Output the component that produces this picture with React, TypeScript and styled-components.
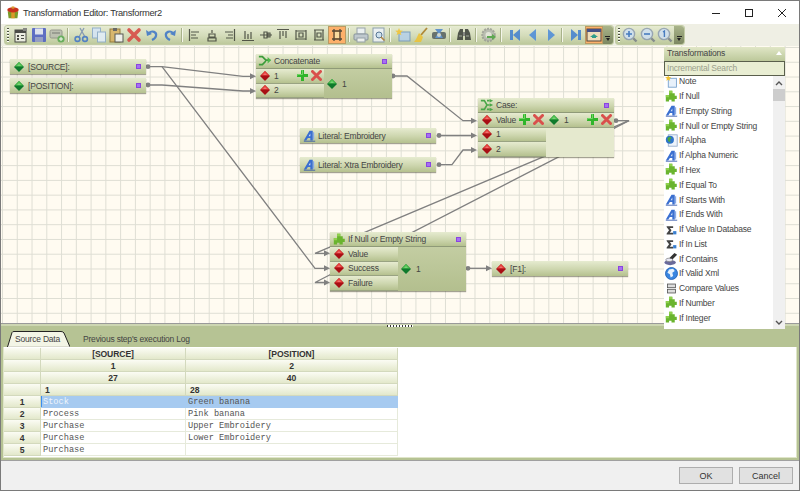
import React from "react";
import styled, { createGlobalStyle } from "styled-components";

const GlobalStyle = createGlobalStyle`
  html, body { margin: 0; padding: 0; background: #f0f0f0; }
  body { font-family: "Liberation Sans", Arial, sans-serif; font-size: 8.5px; letter-spacing: -0.2px; color: #444; }
`;

/* ---------- icons ---------- */

const Svg = styled.svg`
  display: block;
  flex: none;
`;

const Ico = ({ s = 16, children }: { s?: number; children: React.ReactNode }) => (
  <Svg width={s} height={s} viewBox="0 0 16 16">
    {children}
  </Svg>
);

const Diamond = ({ light, dark }: { light: string; dark: string }) => (
  <Svg width={10} height={10} viewBox="0 0 10 10">
    <polygon points="5,0 10,5 5,10 0,5" fill={dark} />
    <polygon points="5,0 9,4.6 1,4.6" fill={light} />
    <polygon points="5,2 7,4 3,4" fill="#fff" opacity="0.25" />
  </Svg>
);
const GreenPort = () => <Diamond light="#4dc24d" dark="#0f7a2c" />;
const RedPort = () => <Diamond light="#e8403c" dark="#a80f14" />;

const PlusIcon = () => (
  <Svg width={11} height={11} viewBox="0 0 11 11">
    <path d="M4 0h3v4h4v3H7v4H4V7H0V4h4z" fill="#2fb52a" />
    <path d="M4.5 .5h1v4h-5v1" fill="none" stroke="#8fe27e" strokeWidth="0.7" />
  </Svg>
);
const CrossIcon = () => (
  <Svg width={11} height={11} viewBox="0 0 11 11">
    <path d="M1.5 1.5l8 8M9.5 1.5l-8 8" stroke="#d9504c" strokeWidth="3" strokeLinecap="round" />
  </Svg>
);

const Puzzle = () => (
  <Ico s={13}>
    <path d="M5 1h4v3h3v3h2.5v4H12v3H8v-2H5v2H1V6h4z" fill="#6ab42e" />
    <path d="M5 1h4v3H5zM1 6h4v3H1z" fill="#8fd04c" />
  </Ico>
);
const LiteralIcon = () => (
  <Ico s={13}>
    <path d="M1 14L8 2h4v12h-3v-3H6l-2 3z" fill="#3a6fd0" />
    <path d="M7 9l2-3.5V9z" fill="#dfe9fb" />
    <path d="M1 15h14" stroke="#2a4fa8" />
    <path d="M13 4v9" stroke="#88aae8" strokeWidth="1.5" />
  </Ico>
);
const NoteIcon = () => (
  <Ico s={13}>
    <rect x="4" y="4" width="10" height="11" fill="#e8f1fb" stroke="#6d9ac8" />
    <path d="M4 0l1 2.6 2.8.2-2.2 1.7.8 2.7L4 5.7 1.6 7.2l.8-2.7L.2 2.8 3 2.6z" fill="#f2c230" />
  </Ico>
);
const GlobeDoc = () => (
  <Ico s={13}>
    <rect x="4" y="1" width="11" height="14" fill="#eef3fa" stroke="#8fa8c8" />
    <circle cx="6" cy="7" r="5" fill="#2f74c8" />
    <path d="M3 5l3-2 2 2-2 2 1 3-3-1z" fill="#4ca83c" />
  </Ico>
);
const DbIcon = () => (
  <Ico s={13}>
    <path d="M2 4h8v2H6l2 3-2 3h4v2H2v-1l3-4-3-4z" fill="#444" />
    <rect x="10" y="10" width="4" height="4" fill="#3a7fd0" />
  </Ico>
);
const BrushIcon = () => (
  <Ico s={14}>
    <ellipse cx="7" cy="12" rx="6.5" ry="3" fill="#6a6a9a" />
    <path d="M12 1l3 2-6 6-3-2z" fill="#333" />
    <ellipse cx="6" cy="9" rx="4" ry="2" fill="#e8e8f4" stroke="#555" strokeWidth="0.6" />
  </Ico>
);
const GlobeIcon = () => (
  <Ico s={13}>
    <circle cx="8" cy="8" r="7.4" fill="#3a86e0" stroke="#1e5cb0" />
    <path d="M5 3l5-1 2 3-3 2 1 4-3 2-1-4-3-2z" fill="#e8f2fc" />
  </Ico>
);
const CompareIcon = () => (
  <Ico s={13}>
    <rect x="3" y="2.5" width="10" height="4.5" fill="#ddd" stroke="#555" />
    <rect x="3" y="9" width="10" height="4.5" fill="#ddd" stroke="#555" />
  </Ico>
);
const ConcatIcon = () => (
  <Ico s={14}>
    <path d="M1 3h4l4 4h5M1 12h4l4-4" fill="none" stroke="#3c9c3a" strokeWidth="2" />
    <path d="M11 3.5l4 3.7-4 3.7z" fill="#4fb84a" />
  </Ico>
);
const CaseIcon = () => (
  <Ico s={14}>
    <path d="M1 3h4l3 5-3 5H1M8 3h3M8 13h3M8 8h3" fill="none" stroke="#4aa648" strokeWidth="1.8" />
    <path d="M11 1l4 2-4 2zM11 6l4 2-4 2zM11 11l4 2-4 2z" fill="#4aa648" />
  </Ico>
);

/* toolbar glyphs */
const PropsIcon = () => (
  <Ico>
    <rect x="2" y="3" width="11" height="12" fill="#f0f0e8" stroke="#333" />
    <rect x="2" y="3" width="11" height="3" fill="#333" />
    <path d="M4 8h2v2H4zM4 11h2v2H4zM8 8h3v1H8zM8 11h3v1H8z" fill="#333" />
    <rect x="10" y="1" width="4" height="3" fill="#777" />
  </Ico>
);
const SaveIcon = () => (
  <Ico>
    <rect x="1" y="1" width="14" height="14" rx="1" fill="#4a5cc4" />
    <rect x="4" y="1.5" width="8" height="6" fill="#dfe4f6" />
    <rect x="4" y="10" width="8" height="5" fill="#8c96c8" />
  </Ico>
);
const AddIcon = () => (
  <Ico>
    <rect x="1" y="3" width="12" height="8" rx="1.5" fill="#b9bdb0" stroke="#8a8c84" />
    <rect x="3" y="5" width="8" height="2" fill="#8f928a" />
    <circle cx="12" cy="12" r="3.6" fill="#58a850" />
    <path d="M12 10v4M10 12h4" stroke="#fff" />
  </Ico>
);
const CutIcon = () => (
  <Ico>
    <path d="M11 1L6 10M7 1l5 9" stroke="#7a8fb0" strokeWidth="1.3" />
    <circle cx="4.5" cy="12" r="2.4" fill="none" stroke="#3f74c8" strokeWidth="1.6" />
    <circle cx="12" cy="12" r="2.4" fill="none" stroke="#3f74c8" strokeWidth="1.6" />
  </Ico>
);
const CopyIcon = () => (
  <Ico>
    <rect x="1.5" y="1" width="8" height="10" fill="#d5e5f7" stroke="#88a8cc" />
    <rect x="6.5" y="5" width="8" height="10" fill="#e3effb" stroke="#88a8cc" />
  </Ico>
);
const PasteIcon = () => (
  <Ico>
    <rect x="2" y="2" width="10" height="13" fill="#d8b060" stroke="#8a6a28" />
    <rect x="5" y="1" width="4" height="3" fill="#555" />
    <rect x="7" y="7" width="8" height="8" fill="#f4f4f4" stroke="#444" />
  </Ico>
);
const DeleteIcon = () => (
  <Ico>
    <path d="M3 3l10 10M13 3L3 13" stroke="#d8433f" strokeWidth="3.6" strokeLinecap="round" />
  </Ico>
);
const UndoIcon = () => (
  <Ico>
    <path d="M5 6c3-3 8-1 7 3-.4 2-2 3-4 4" fill="none" stroke="#3a74c8" strokeWidth="2.2" />
    <path d="M2 3l1 6 5-2z" fill="#3a74c8" />
  </Ico>
);
const RedoIcon = () => (
  <Ico>
    <path d="M11 6C8 3 3 5 4 9c.4 2 2 3 4 4" fill="none" stroke="#3a74c8" strokeWidth="2.2" />
    <path d="M14 3l-1 6-5-2z" fill="#3a74c8" />
  </Ico>
);
const Bars = ({ d }: { d: string }) => (
  <Ico>
    <path d={d} fill="none" stroke="#3d4036" strokeWidth="1.2" />
  </Ico>
);
const alignPaths = [
  "M3.5 2v12M5 5h8M5 8h5M5 11h7",
  "M8 3v3M5 7h6v3H5zM4 11h8v3H4z",
  "M12.5 2v12M3 5h8M6 8h5M4 11h7",
  "M2 13.5h12M5 12V4M8 12V7M11 12V5",
  "M2 8h12M6 5h3v6H6zM10 6h2v4h-2z",
  "M2 2.5h12M5 4v8M8 4v5M11 4v7",
  "M3 3v10M13 3v10M3 4h10M3 12h10M6 6h4v4H6z",
  "M3 3h10M3 13h10M4 3v10M12 3v10M6 6h4v4H6z",
];
const SizeActive = () => (
  <Ico>
    <path d="M3 4h10M3 12h10M5 2v12M11 2v12" stroke="#33362c" strokeWidth="1.3" />
    <rect x="6" y="5" width="4" height="6" fill="#f7e3a8" />
  </Ico>
);
const PrintIcon = () => (
  <Ico>
    <rect x="4" y="1" width="8" height="6" fill="#eef3f8" stroke="#8c98a8" />
    <rect x="1" y="7" width="14" height="6" rx="1" fill="#bcc6d2" stroke="#7a8696" />
    <rect x="4" y="11" width="8" height="4" fill="#f4f6f8" stroke="#8c98a8" />
  </Ico>
);
const PreviewIcon = () => (
  <Ico>
    <rect x="2" y="1" width="11" height="14" fill="#eef3f8" stroke="#7f93aa" />
    <circle cx="8" cy="8" r="3" fill="#cfe4f8" stroke="#42648c" />
    <path d="M10 10l3.5 3.5" stroke="#b07830" strokeWidth="1.6" />
  </Ico>
);
const NewNoteIcon = () => (
  <Ico>
    <rect x="4" y="5" width="11" height="9" fill="#b5d0ea" stroke="#6d94bc" />
    <path d="M4 1l1 2.6 2.8.2-2.2 1.7.8 2.7L4 6.7 1.6 8.2l.8-2.7L.2 3.8 3 3.6z" fill="#f2c230" />
  </Ico>
);
const BroomIcon = () => (
  <Ico>
    <path d="M14 1L8 8" stroke="#a87a20" strokeWidth="1.8" />
    <path d="M6 6l4 4-2 5H1c2-2 3-5 5-9z" fill="#eec232" />
  </Ico>
);
const LinkIcon = () => (
  <Ico>
    <rect x="1" y="5" width="14" height="7" rx="2" fill="#55605f" />
    <path d="M4 2h8l-3 4 3 5H4l3-5z" fill="#4d86cc" />
    <circle cx="8" cy="8" r="2" fill="#cfd6d0" />
  </Ico>
);
const BinocularsIcon = () => (
  <Ico>
    <path d="M2 6l2-4h3v11H1zM14 6l-2-4H9v11h6z" fill="#3a3e38" />
    <rect x="7" y="5" width="2" height="4" fill="#777" />
    <path d="M3 9h3M10 9h3" stroke="#9aa094" />
  </Ico>
);
const GearIcon = () => (
  <Ico>
    <circle cx="7.5" cy="8" r="6.2" fill="#b4b8ae" stroke="#9a9d94" strokeDasharray="2 1" strokeWidth="2" />
    <circle cx="7.5" cy="8" r="3" fill="#e4e6dc" />
    <path d="M6 9h5V7l4 3-4 3v-2H6z" fill="#4aa040" />
  </Ico>
);
const FirstIcon = () => (
  <Ico>
    <rect x="3" y="3" width="3" height="10" fill="#3f7fd0" />
    <path d="M13 2v12L6 8z" fill="#3f7fd0" />
  </Ico>
);
const PrevIcon = () => (
  <Ico>
    <path d="M11 2v12L4 8z" fill="#4a8ada" />
  </Ico>
);
const NextIcon = () => (
  <Ico>
    <path d="M5 2v12l7-6z" fill="#4a8ada" />
  </Ico>
);
const LastIcon = () => (
  <Ico>
    <path d="M3 2v12l7-6z" fill="#3f7fd0" />
    <rect x="10" y="3" width="3" height="10" fill="#3f7fd0" />
  </Ico>
);
const PanelToggle = () => (
  <Ico>
    <rect x="1" y="2" width="14" height="12" fill="#efe4c8" stroke="#333" />
    <rect x="1" y="2" width="14" height="3" fill="#27408c" />
    <path d="M6 9h4v2H6z" fill="#0e9a90" />
    <path d="M4 10l4-3 4 3z" fill="#0e9a90" />
  </Ico>
);
const Lens = ({ mark }: { mark: React.ReactNode }) => (
  <Ico>
    <path d="M10 10l4.5 4.5" stroke="#7a8088" strokeWidth="2.4" />
    <circle cx="7" cy="7" r="5.6" fill="#cfe0f2" stroke="#8d9cb0" strokeWidth="1.4" />
    {mark}
  </Ico>
);
const ZoomInIcon = () => <Lens mark={<path d="M4 7h6M7 4v6" stroke="#2f6cc0" strokeWidth="1.6" />} />;
const ZoomOutIcon = () => <Lens mark={<path d="M4 7h6" stroke="#2f6cc0" strokeWidth="1.6" />} />;
const ZoomOneIcon = () => <Lens mark={<path d="M6 5l1.4-1v6" fill="none" stroke="#2f6cc0" strokeWidth="1.4" />} />;

const AppIcon = () => (
  <Ico s={14}>
    <path d="M2 6h12l-1 8H3z" fill="#7a9a28" />
    <path d="M6 6h4v8H6z" fill="#d89a28" />
    <ellipse cx="8" cy="4.5" rx="6.5" ry="3" fill="#c8301c" />
    <rect x="6.5" y="0.5" width="3" height="2.5" fill="#d8a030" />
  </Ico>
);

/* ---------- window chrome ---------- */

const Window = styled.div`
  box-sizing: border-box;
  width: 800px;
  height: 491px;
  border: 1px solid #7a7a7a;
  display: flex;
  flex-direction: column;
  overflow: hidden;
  background: #f0f0f0;
`;

const TitleBar = styled.div`
  height: 23px;
  flex: none;
  background: #fff;
  display: flex;
  align-items: center;
  padding-left: 5px;
`;

const Title = styled.span`
  margin-left: 3px;
  font-size: 9.3px;
  letter-spacing: -0.3px;
  color: #333;
`;

const WinControls = styled.div`
  margin-left: auto;
  display: flex;
  margin-right: 1px;
`;

const WinButton = styled.div`
  width: 33px;
  height: 23px;
  display: flex;
  align-items: center;
  justify-content: center;
`;

const ToolbarBand = styled.div`
  height: 22px;
  flex: none;
  background: #efefe4;
  display: flex;
  align-items: flex-start;
  padding: 1px 0 0 3px;
  gap: 1px;
  box-sizing: border-box;
`;

const Toolbar = styled.div`
  height: 20px;
  display: flex;
  align-items: center;
  box-sizing: border-box;
  border: 1px solid #c3cca6;
  border-radius: 3px;
  background: linear-gradient(#e6ebd2, #d3dbb9 55%, #bdc99c);
`;

const Grip = styled.div<{ $tight?: boolean }>`
  width: 6px;
  height: 14px;
  margin-right: ${(p) => (p.$tight ? "-1px" : "1px")};
  flex: none;
  background: repeating-linear-gradient(#4c5040 0 1px, #fff 1px 2px, transparent 2px 3px) 2px 0 / 2px 100% no-repeat;
`;

const ToolButton = styled.div<{ $active?: boolean }>`
  width: 17.9px;
  height: 18px;
  box-sizing: border-box;
  flex: none;
  display: flex;
  align-items: center;
  justify-content: center;
  ${(p) => p.$active && "background: #fdb06a; border: 1px solid #b99a64;"}
  svg {
    opacity: 0.85;
  }
`;

const ToolSep = styled.div<{ $extra?: number }>`
  width: 1px;
  height: 14px;
  flex: none;
  margin: 0 ${(p) => 2.5 + (p.$extra ?? 0)}px 0 2.5px;
  background: #f4f6ea;
  box-shadow: -1px 0 0 #a8b28a;
`;

const Overflow = styled.div`
  width: 10px;
  height: 100%;
  flex: none;
  background: linear-gradient(#a9b48a, #7d8862);
  border-radius: 0 3px 3px 0;
  display: flex;
  flex-direction: column;
  align-items: center;
  justify-content: flex-end;
  padding-bottom: 3px;
  box-sizing: border-box;
  gap: 1px;
  &::before {
    content: "";
    width: 5px;
    height: 1px;
    background: #222;
  }
  &::after {
    content: "";
    border: 2.5px solid transparent;
    border-top: 3px solid #222;
    border-bottom: 0;
  }
`;

/* ---------- canvas ---------- */

const Canvas = styled.div`
  position: relative;
  z-index: 1;
  height: 278px;
  flex: none;
  box-sizing: border-box;
  border-bottom: 1px solid #9a9a9a;
  background-color: #fffbf1;
  background-image: linear-gradient(#deded4 1px, transparent 1px), linear-gradient(90deg, #deded4 1px, transparent 1px);
  background-size: 14.77px 14.77px;
  background-position: 1px 1px;
`;

const Wires = styled.svg`
  position: absolute;
  left: 0;
  top: 0;
`;

const NodeBase = styled.div<{ $x: number; $y: number }>`
  position: absolute;
  left: ${(p) => p.$x - 1}px;
  top: ${(p) => p.$y - 46}px;
  width: 136px;
  box-shadow: 0 1px 1px rgba(90, 90, 70, 0.55);
  color: #444;
`;

const barGradient = "linear-gradient(#e6ebd0, #cdd6ae 55%, #b5c18f)";

const SimpleNode = styled(NodeBase)`
  height: 15px;
  display: flex;
  align-items: center;
  background: ${barGradient};
`;

const NodeHeader = styled.div`
  height: 15px;
  box-sizing: border-box;
  display: flex;
  align-items: center;
  background: ${barGradient};
  border-bottom: 1px solid #8f9a78;
`;

const Slot = styled.span`
  width: 16px;
  margin-left: 1px;
  flex: none;
  display: flex;
  align-items: center;
  justify-content: center;
`;

const OutSlot = styled(Slot)`
  margin-left: 0;
  margin-right: 2px;
`;

const Label = styled.span`
  margin-left: 1px;
  white-space: nowrap;
`;

const Port = styled.span`
  width: 3px;
  height: 3px;
  margin-left: auto;
  margin-right: 5px;
  flex: none;
  background: #a76ff2;
  border: 1px solid #8a45e0;
`;

const BlockBody = styled.div`
  display: flex;
`;

const InputColumn = styled.div<{ $w: number }>`
  width: ${(p) => p.$w}px;
  flex: none;
`;

const Row = styled.div`
  height: 14.6px;
  box-sizing: border-box;
  display: flex;
  align-items: center;
  background: ${barGradient};
  border-bottom: 1px solid #99a382;
`;

const OutputArea = styled.div<{ $light?: boolean }>`
  flex: 1;
  display: flex;
  align-items: center;
  background: ${(p) => (p.$light ? "#e5e9ce" : "linear-gradient(#c3cda2, #b3bf8e)")};
`;

const CaseCell = styled.div`
  width: 68px;
  flex: none;
  display: flex;
  align-items: center;
`;

const OutCell = styled.span`
  flex: 1;
  display: flex;
  align-items: center;
`;

const Controls = styled.span`
  margin-left: auto;
  padding-right: 2px;
  display: flex;
  gap: 3px;
`;

const wireStyle = { stroke: "#808080", strokeWidth: 1.3, fill: "none" };
const wirePaths = [
  "M148 66.7H162L243 76.3H252",
  "M148 85H162L243 91H252",
  "M162 66.7L315 268.3H326",
  "M393 76H407L463 120.7H473",
  "M439 135.5H473",
  "M439 164.7H452L463 150H473",
  "M616 120.7H629L315 253.3H326",
  "M629 120.7L315 282.5H326",
  "M468 268.3H488",
];
const arrowTips = [
  [256, 76.3],
  [256, 91],
  [330, 268.3],
  [477, 120.7],
  [477, 135.5],
  [477, 150],
  [330, 253.3],
  [330, 282.5],
  [492, 268.3],
];
const wireDots = [
  [148, 66.7],
  [148, 85],
  [393, 76],
  [439, 135.5],
  [439, 164.7],
  [616, 120.7],
  [468, 268.3],
];

/* ---------- transformations list ---------- */

const Palette = styled.div`
  position: absolute;
  left: 663px;
  top: 1px;
  width: 121px;
  z-index: 2;
  display: flex;
  flex-direction: column;
`;

const PaletteHeader = styled.div`
  height: 14px;
  box-sizing: border-box;
  display: flex;
  align-items: center;
  justify-content: space-between;
  padding: 0 3px 2px;
  background: linear-gradient(#e0e6c6, #bcc89a);
  color: #444;
`;

const Caret = styled.span`
  border: 3px solid transparent;
  border-bottom: 4px solid #fff;
  border-top: 0;
`;

const SearchBox = styled.div`
  height: 15px;
  box-sizing: border-box;
  border: 1px solid #5a5f4c;
  background: #e9eed3;
  color: #9a9f8c;
  padding: 0 0 1px 2px;
  display: flex;
  align-items: center;
`;

const PaletteBody = styled.div`
  height: 253px;
  display: flex;
  background: #fff;
  overflow: hidden;
`;

const PaletteList = styled.div`
  flex: 1;
  margin-top: -2px;
`;

const PaletteItem = styled.div`
  height: 14.77px;
  display: flex;
  align-items: center;
  gap: 1px;
  white-space: nowrap;
  color: #444;
`;

const PaletteIcon = styled.span`
  width: 14px;
  flex: none;
  display: flex;
  justify-content: center;
`;

const ScrollBar = styled.div`
  width: 12px;
  flex: none;
  background: #f0f0f0;
  display: flex;
  flex-direction: column;
  align-items: center;
`;

const ScrollThumb = styled.div`
  width: 100%;
  height: 12px;
  background: #cdcdcd;
  flex: none;
`;

const ScrollArrow = styled.div`
  height: 13px;
  width: 100%;
  flex: none;
  display: flex;
  align-items: center;
  justify-content: center;
`;

const ScrollSpacer = styled.div`
  flex: 1;
`;

const paletteItems: [string, React.ComponentType][] = [
  ["Note", NoteIcon],
  ["If Null", Puzzle],
  ["If Empty String", LiteralIcon],
  ["If Null or Empty String", Puzzle],
  ["If Alpha", GlobeDoc],
  ["If Alpha Numeric", LiteralIcon],
  ["If Hex", Puzzle],
  ["If Equal To", Puzzle],
  ["If Starts With", LiteralIcon],
  ["If Ends With", LiteralIcon],
  ["If Value In Database", DbIcon],
  ["If In List", DbIcon],
  ["If Contains", BrushIcon],
  ["If Valid Xml", GlobeIcon],
  ["Compare Values", CompareIcon],
  ["If Number", Puzzle],
  ["If Integer", Puzzle],
];

/* ---------- bottom panel ---------- */

const BottomPanel = styled.div`
  height: 136px;
  flex: none;
  box-sizing: border-box;
  background: #b6c394;
  border-top: 2px solid #cdd6b2;
  display: flex;
  flex-direction: column;
  padding: 0 2px 2px;
  position: relative;
`;

const SplitHandle = styled.div`
  position: absolute;
  left: 386px;
  top: -1px;
  width: 26px;
  height: 2px;
  background: repeating-linear-gradient(90deg, #333 0 1px, #fff 1px 3px);
`;

const TabStrip = styled.div`
  height: 21px;
  flex: none;
  display: flex;
  align-items: flex-end;
  padding-left: 4px;
`;

const Tab = styled.div<{ $active?: boolean }>`
  position: relative;
  height: 16px;
  display: flex;
  align-items: center;
  white-space: nowrap;
  color: #444;
  ${(p) => (p.$active ? "width: 63px; padding-left: 8px; box-sizing: border-box;" : "margin-left: 13px;")}
`;

const TabShape = styled.svg`
  position: absolute;
  left: 0;
  top: 0;
`;

const TabLabel = styled.span`
  position: relative;
`;

const GridFrame = styled.div`
  flex: 1;
  background: #fff;
  border: 1px solid #dfe5c9;
  border-top: 0;
  min-height: 0;
`;

const DataGrid = styled.div`
  display: grid;
  grid-template-columns: 37px 145px 212px;
  grid-auto-rows: 12px;
  padding-top: 1px;
  width: 394px;
`;

const headBg = "linear-gradient(#fbfcf4, #e3e8cb)";

const Cell = styled.div`
  box-sizing: border-box;
  border-right: 1px solid #e6eadb;
  border-bottom: 1px solid #e6eadb;
  display: flex;
  align-items: center;
  overflow: hidden;
  white-space: nowrap;
`;

const HeadCell = styled(Cell)<{ $left?: boolean }>`
  background: ${headBg};
  border-color: #d3d9bd;
  font-weight: 700;
  font-size: 8.6px;
  letter-spacing: -0.1px;
  color: #333;
  justify-content: ${(p) => (p.$left ? "flex-start" : "center")};
  padding-left: ${(p) => (p.$left ? "4px" : "0")};
`;

const DataCell = styled(Cell)<{ $sel?: boolean; $mark?: boolean }>`
  font-family: "Liberation Mono", "Courier New", monospace;
  font-size: 8.65px;
  letter-spacing: 0;
  padding-left: 2px;
  color: ${(p) => (p.$mark ? "#eef4fb" : "#555")};
  ${(p) => p.$sel && "background: #a6caf0; border-color: #a6caf0;"}
  ${(p) => p.$mark && "box-shadow: inset 1px 0 0 #3a8ef0;"}
`;

const Footer = styled.div`
  flex: 1;
  border-top: 1px solid #a0a0a0;
  background: #f0f0f0;
  display: flex;
  align-items: flex-start;
  justify-content: flex-end;
  gap: 6px;
  padding: 6px 6px 0 0;
`;

const DialogButton = styled.div`
  width: 54px;
  height: 17px;
  box-sizing: border-box;
  background: #e1e1e1;
  border: 1px solid #adadad;
  display: flex;
  align-items: center;
  justify-content: center;
  color: #333;
  font-size: 9px;
  letter-spacing: 0;
`;

const gridRows = [
  ["Stock", "Green banana"],
  ["Process", "Pink banana"],
  ["Purchase", "Upper Embroidery"],
  ["Purchase", "Lower Embroidery"],
  ["Purchase", ""],
];

const alignTools = alignPaths.map((d) => <Bars key={d} d={d} />);

export default function App() {
  return (
    <>
      <GlobalStyle />
      <Window>
        <TitleBar>
          <AppIcon />
          <Title>Transformation Editor: Transformer2</Title>
          <WinControls>
            <WinButton>
              <Svg width={10} height={10} viewBox="0 0 10 10">
                <path d="M1 5.5h8" stroke="#222" />
              </Svg>
            </WinButton>
            <WinButton>
              <Svg width={10} height={10} viewBox="0 0 10 10">
                <rect x="1.5" y="1.5" width="7" height="7" fill="none" stroke="#222" />
              </Svg>
            </WinButton>
            <WinButton>
              <Svg width={10} height={10} viewBox="0 0 10 10">
                <path d="M1 1l8 8M9 1l-8 8" stroke="#222" />
              </Svg>
            </WinButton>
          </WinControls>
        </TitleBar>

        <ToolbarBand>
          <Toolbar>
            <Grip />
            <ToolButton><PropsIcon /></ToolButton>
            <ToolButton><SaveIcon /></ToolButton>
            <ToolButton><AddIcon /></ToolButton>
            <ToolSep />
            <ToolButton><CutIcon /></ToolButton>
            <ToolButton><CopyIcon /></ToolButton>
            <ToolButton><PasteIcon /></ToolButton>
            <ToolButton><DeleteIcon /></ToolButton>
            <ToolButton><UndoIcon /></ToolButton>
            <ToolButton><RedoIcon /></ToolButton>
            <ToolSep />
            {alignTools.map((icon, i) => (
              <ToolButton key={i}>{icon}</ToolButton>
            ))}
            <ToolButton $active><SizeActive /></ToolButton>
            <ToolSep />
            <ToolButton><PrintIcon /></ToolButton>
            <ToolButton><PreviewIcon /></ToolButton>
            <ToolSep />
            <ToolButton><NewNoteIcon /></ToolButton>
            <ToolButton><BroomIcon /></ToolButton>
            <ToolButton><LinkIcon /></ToolButton>
            <ToolSep $extra={2} />
            <ToolButton><BinocularsIcon /></ToolButton>
            <ToolSep $extra={1} />
            <ToolButton><GearIcon /></ToolButton>
            <ToolSep $extra={2} />
            <ToolButton><FirstIcon /></ToolButton>
            <ToolButton><PrevIcon /></ToolButton>
            <ToolButton><NextIcon /></ToolButton>
            <ToolSep $extra={1} />
            <ToolButton><LastIcon /></ToolButton>
            <ToolButton $active><PanelToggle /></ToolButton>
            <Overflow />
          </Toolbar>
          <Toolbar>
            <Grip $tight />
            <ToolButton><ZoomInIcon /></ToolButton>
            <ToolButton><ZoomOutIcon /></ToolButton>
            <ToolButton><ZoomOneIcon /></ToolButton>
            <Overflow />
          </Toolbar>
        </ToolbarBand>

        <Canvas>
          <Wires width={798} height={278} viewBox="1 46 798 278">
            {wirePaths.map((d) => (
              <path key={d} d={d} {...wireStyle} />
            ))}
            {arrowTips.map(([x, y]) => (
              <polygon key={`${x}-${y}`} points={`${x},${y} ${x - 6},${y - 3} ${x - 6},${y + 3}`} fill="#808080" />
            ))}
            {wireDots.map(([x, y]) => (
              <circle key={`${x}-${y}`} cx={x} cy={y} r="2.4" fill="#808080" />
            ))}
          </Wires>

          <SimpleNode $x={10} $y={59}>
            <Slot><GreenPort /></Slot>
            <Label>[SOURCE]:</Label>
            <Port />
          </SimpleNode>
          <SimpleNode $x={10} $y={78}>
            <Slot><GreenPort /></Slot>
            <Label>[POSITION]:</Label>
            <Port />
          </SimpleNode>

          <NodeBase $x={256} $y={54}>
            <NodeHeader>
              <Slot><ConcatIcon /></Slot>
              <Label>Concatenate</Label>
              <Port />
            </NodeHeader>
            <BlockBody>
              <InputColumn $w={68}>
                <Row>
                  <Slot><RedPort /></Slot>
                  <Label>1</Label>
                  <Controls><PlusIcon /><CrossIcon /></Controls>
                </Row>
                <Row>
                  <Slot><RedPort /></Slot>
                  <Label>2</Label>
                </Row>
              </InputColumn>
              <OutputArea>
                <OutSlot><GreenPort /></OutSlot>
                <span>1</span>
              </OutputArea>
            </BlockBody>
          </NodeBase>

          <NodeBase $x={478} $y={98}>
            <NodeHeader>
              <Slot><CaseIcon /></Slot>
              <Label>Case:</Label>
              <Port />
            </NodeHeader>
            <Row>
              <CaseCell>
                <Slot><RedPort /></Slot>
                <Label>Value</Label>
                <Controls><PlusIcon /><CrossIcon /></Controls>
              </CaseCell>
              <OutCell>
                <OutSlot><GreenPort /></OutSlot>
                <span>1</span>
                <Controls><PlusIcon /><CrossIcon /></Controls>
              </OutCell>
            </Row>
            <BlockBody>
              <InputColumn $w={68}>
                <Row>
                  <Slot><RedPort /></Slot>
                  <Label>1</Label>
                </Row>
                <Row>
                  <Slot><RedPort /></Slot>
                  <Label>2</Label>
                </Row>
              </InputColumn>
              <OutputArea $light />
            </BlockBody>
          </NodeBase>

          <SimpleNode $x={300} $y={128}>
            <Slot><LiteralIcon /></Slot>
            <Label>Literal: Embroidery</Label>
            <Port />
          </SimpleNode>
          <SimpleNode $x={300} $y={157}>
            <Slot><LiteralIcon /></Slot>
            <Label>Literal: Xtra Embroidery</Label>
            <Port />
          </SimpleNode>

          <NodeBase $x={330} $y={232}>
            <NodeHeader>
              <Slot><Puzzle /></Slot>
              <Label>If Null or Empty String</Label>
              <Port />
            </NodeHeader>
            <BlockBody>
              <InputColumn $w={68}>
                <Row>
                  <Slot><RedPort /></Slot>
                  <Label>Value</Label>
                </Row>
                <Row>
                  <Slot><RedPort /></Slot>
                  <Label>Success</Label>
                </Row>
                <Row>
                  <Slot><RedPort /></Slot>
                  <Label>Failure</Label>
                </Row>
              </InputColumn>
              <OutputArea>
                <OutSlot><GreenPort /></OutSlot>
                <span>1</span>
              </OutputArea>
            </BlockBody>
          </NodeBase>

          <SimpleNode $x={492} $y={261}>
            <Slot><RedPort /></Slot>
            <Label>[F1]:</Label>
            <Port />
          </SimpleNode>

          <Palette>
            <PaletteHeader>
              <span>Transformations</span>
              <Caret />
            </PaletteHeader>
            <SearchBox>Incremental Search</SearchBox>
            <PaletteBody>
              <PaletteList>
                {paletteItems.map(([name, Icon]) => (
                  <PaletteItem key={name}>
                    <PaletteIcon><Icon /></PaletteIcon>
                    <span>{name}</span>
                  </PaletteItem>
                ))}
              </PaletteList>
              <ScrollBar>
                <ScrollArrow>
                  <Svg width={8} height={6} viewBox="0 0 8 6">
                    <path d="M1 5l3-3 3 3" fill="none" stroke="#555" strokeWidth="1.4" />
                  </Svg>
                </ScrollArrow>
                <ScrollThumb />
                <ScrollSpacer />
                <ScrollArrow>
                  <Svg width={8} height={6} viewBox="0 0 8 6">
                    <path d="M1 1l3 3 3-3" fill="none" stroke="#555" strokeWidth="1.4" />
                  </Svg>
                </ScrollArrow>
              </ScrollBar>
            </PaletteBody>
          </Palette>
        </Canvas>

        <BottomPanel>
          <SplitHandle />
          <TabStrip>
            <Tab $active>
              <TabShape width={63} height={16} viewBox="0 0 63 16">
                <path d="M0.5 16L5 1.5Q5.5 .5 7 .5H54Q56 .5 57 2L63 16Z" fill="#f3f5e6" stroke="#222" />
                <path d="M1 16H62.5" stroke="#f3f5e6" strokeWidth="1.5" />
              </TabShape>
              <TabLabel>Source Data</TabLabel>
            </Tab>
            <Tab>Previous step's execution Log</Tab>
          </TabStrip>
          <GridFrame>
            <DataGrid>
              <HeadCell />
              <HeadCell>[SOURCE]</HeadCell>
              <HeadCell>[POSITION]</HeadCell>
              <HeadCell />
              <HeadCell>1</HeadCell>
              <HeadCell>2</HeadCell>
              <HeadCell />
              <HeadCell>27</HeadCell>
              <HeadCell>40</HeadCell>
              <HeadCell />
              <HeadCell $left>1</HeadCell>
              <HeadCell $left>28</HeadCell>
              {gridRows.map(([a, b], i) => (
                <React.Fragment key={i}>
                  <HeadCell>{i + 1}</HeadCell>
                  <DataCell $sel={i === 0} $mark={i === 0}>{a}</DataCell>
                  <DataCell $sel={i === 0}>{b}</DataCell>
                </React.Fragment>
              ))}
            </DataGrid>
          </GridFrame>
        </BottomPanel>

        <Footer>
          <DialogButton>OK</DialogButton>
          <DialogButton>Cancel</DialogButton>
        </Footer>
      </Window>
    </>
  );
}
